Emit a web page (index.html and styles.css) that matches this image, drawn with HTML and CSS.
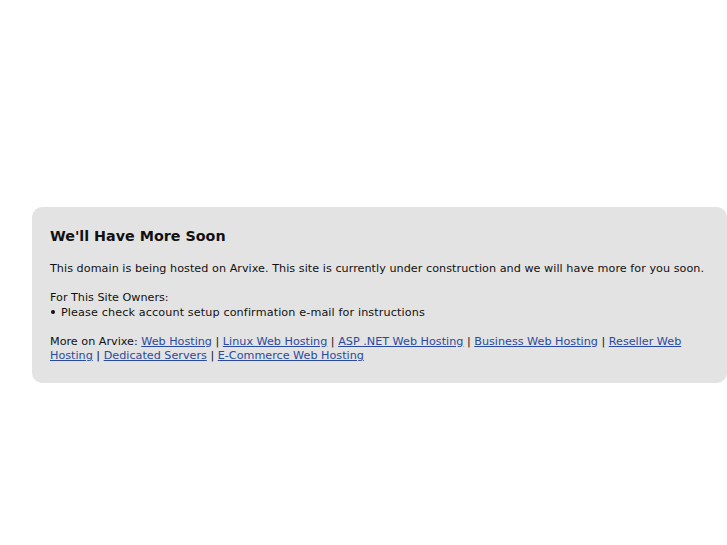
FILE: index.html
```html
<!DOCTYPE html>
<html>
<head>
<meta charset="utf-8">
<link rel="stylesheet" href="styles.css">
</head>
<body>
<div class="box">
  <h1 class="title">We'll Have More Soon</h1>
  <p class="para">This domain is being hosted on Arvixe. This site is currently under construction and we will have more for you soon.</p>
  <div class="owners">For This Site Owners:</div>
  <ul class="list">
    <li class="item">Please check account setup confirmation e-mail for instructions</li>
  </ul>
  <p class="more">More on Arvixe: <a href="#">Web Hosting</a> | <a href="#">Linux Web Hosting</a> | <a href="#">ASP .NET Web Hosting</a> | <a href="#">Business Web Hosting</a> | <a href="#">Reseller Web Hosting</a> | <a href="#">Dedicated Servers</a> | <a href="#">E-Commerce Web Hosting</a></p>
</div>
</body>
</html>
```
FILE: styles.css
```css
html, body {
  margin: 0;
  padding: 0;
  background: #ffffff;
}
body {
  font-family: "DejaVu Sans", Verdana, sans-serif;
  font-size: 11.2px;
  line-height: 14.5px;
  color: #111111;
  padding-top: 207px;
}
.box {
  margin-left: 32px;
  width: 695px;
  box-sizing: border-box;
  background: #e3e3e3;
  border-radius: 10px;
  padding: 20px 18px 19px 18px;
}
.title {
  font-size: 14.3px;
  line-height: 18px;
  font-weight: bold;
  margin: 0 0 17px 0;
}
.para {
  margin: 0 0 14.5px 0;
  letter-spacing: 0.04px;
}
.owners {
  margin: 0;
}
.list {
  margin: 0 0 14.5px 0;
  padding: 0;
  list-style: none;
}
.item {
  letter-spacing: 0.12px;
}
.item::before {
  content: "";
  display: inline-block;
  width: 4px;
  height: 4px;
  border-radius: 50%;
  background: #111111;
  margin: 0 6px 0 1px;
  vertical-align: 2px;
}
.more {
  margin: 0;
}
.more a {
  color: #2a4aa0;
}
```
